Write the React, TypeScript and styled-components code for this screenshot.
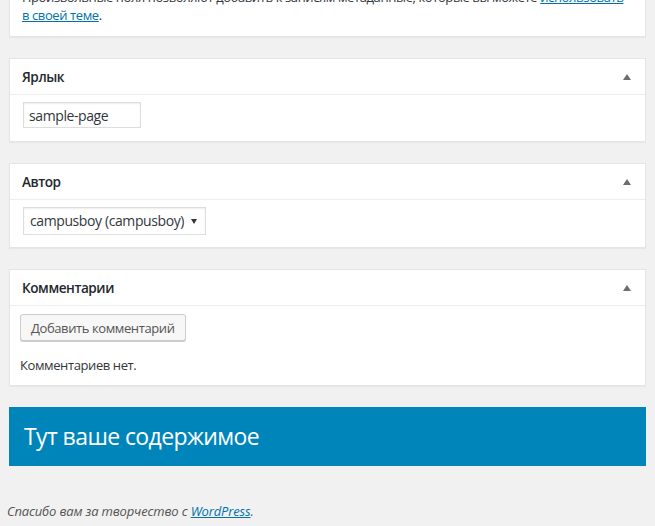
import React, { FC, ReactNode } from "react";
import styled, { createGlobalStyle } from "styled-components";

const GlobalStyle = createGlobalStyle`
  html, body {
    margin: 0;
    padding: 0;
    background: #f1f1f1;
  }

  body {
    font-family: "Open Sans", "Liberation Sans", sans-serif;
    font-size: 13px;
    letter-spacing: -0.4px;
    color: #444;
    overflow: hidden;
  }
`;

const Page = styled.div`
  margin-top: -13px;
  padding: 0 9px;
`;

const Postbox = styled.div`
  margin-bottom: 21px;

  border: 1px solid #e5e5e5;
  box-shadow: 0 1px 1px rgba(0, 0, 0, 0.04);

  background: #fff;
`;

const Header = styled.div`
  display: flex;
  align-items: center;
  justify-content: space-between;

  padding: 8px 14px 8px 12px;
  border-bottom: 1px solid #eee;
`;

const Title = styled.h2`
  margin: 0;

  font-size: 13.6px;
  font-weight: 600;
  line-height: 19px;
  letter-spacing: -0.45px;
  color: #23282d;
`;

const ToggleArrow = styled.span`
  width: 0;
  height: 0;

  border-left: 4px solid transparent;
  border-right: 4px solid transparent;
  border-bottom: 6px solid #6b6f74;
`;

const Inside = styled.div<{ $pad?: string }>`
  padding: ${p => p.$pad || "6px 12px 11px"};

  font-size: 13px;
  line-height: 1.4em;
`;

const Paragraph = styled.p<{ $top?: number }>`
  margin: ${p => p.$top || 0}px 0 0;
  white-space: nowrap;
  color: #32373c;
`;

const Link = styled.a`
  color: #0073aa;
  text-decoration: underline;
`;

const TextInput = styled.input`
  box-sizing: border-box;
  display: block;
  margin: 1px;
  width: 118px;
  height: 26px;

  padding: 3px 5px;
  border: 1px solid #ddd;
  box-shadow: inset 0 1px 2px rgba(0, 0, 0, 0.07);

  font-family: inherit;
  font-size: 14px;
  letter-spacing: -0.4px;
  color: #32373c;
  outline: none;
`;

const SelectBox = styled.div`
  box-sizing: border-box;
  display: flex;
  align-items: center;
  justify-content: space-between;
  margin: 1px;
  width: 183px;
  height: 28px;

  padding: 0 8px 0 6px;
  border: 1px solid #ddd;
  box-shadow: inset 0 1px 2px rgba(0, 0, 0, 0.07);

  font-size: 14px;
  white-space: nowrap;
  color: #32373c;
`;

const Caret = styled.span`
  width: 0;
  height: 0;
  margin-top: 1px;

  border-left: 3px solid transparent;
  border-right: 3px solid transparent;
  border-top: 5px solid #32373c;
`;

const Button = styled.button`
  box-sizing: border-box;
  display: block;
  height: 27px;

  padding: 0 10px;
  border: 1px solid #ccc;
  border-radius: 3px;
  box-shadow: 0 1px 0 #ccc;
  background: #f7f7f7;

  font-family: inherit;
  font-size: 13px;
  letter-spacing: -0.4px;
  color: #555;
`;

const Banner = styled.div`
  display: flex;
  align-items: center;
  height: 59px;

  padding: 0 15px;
  margin-top: 21px;

  background: #0085ba;
`;

const BannerText = styled.h1`
  margin: 0;

  font-size: 23px;
  font-weight: 400;
  letter-spacing: -0.6px;
  color: #fff;
`;

const Footer = styled.p`
  margin: 36px 0 0 -2px;

  font-size: 13px;
  font-style: italic;
  line-height: 18px;
  letter-spacing: -0.15px;
  color: #555;
`;

interface BoxProps {
  title: string;
  pad?: string;
  children: ReactNode;
}

const Box: FC<BoxProps> = props => (
  <Postbox>
    <Header>
      <Title>{props.title}</Title>
      <ToggleArrow />
    </Header>
    <Inside $pad={props.pad}>{props.children}</Inside>
  </Postbox>
);

const App: FC = () => (
  <>
    <GlobalStyle />
    <Page>
      <Postbox>
        <Inside $pad="0 12px 12px">
          <Paragraph>
            Произвольные поля позволяют добавить к записям метаданные, которые вы можете{" "}
            <Link href="#">использовать</Link>
            <br />
            <Link href="#">в своей теме</Link>.
          </Paragraph>
        </Inside>
      </Postbox>

      <Box title="Ярлык" pad="6px 12px 12px">
        <TextInput defaultValue="sample-page" />
      </Box>

      <Box title="Автор">
        <SelectBox>
          <span>campusboy (campusboy)</span>
          <Caret />
        </SelectBox>
      </Box>

      <Box title="Комментарии" pad="8px 10px 10px">
        <Button>Добавить комментарий</Button>
        <Paragraph $top={15}>Комментариев нет.</Paragraph>
      </Box>

      <Banner>
        <BannerText>Тут ваше содержимое</BannerText>
      </Banner>

      <Footer>
        Спасибо вам за творчество с <Link href="#">WordPress</Link>.
      </Footer>
    </Page>
  </>
);

export default App;
